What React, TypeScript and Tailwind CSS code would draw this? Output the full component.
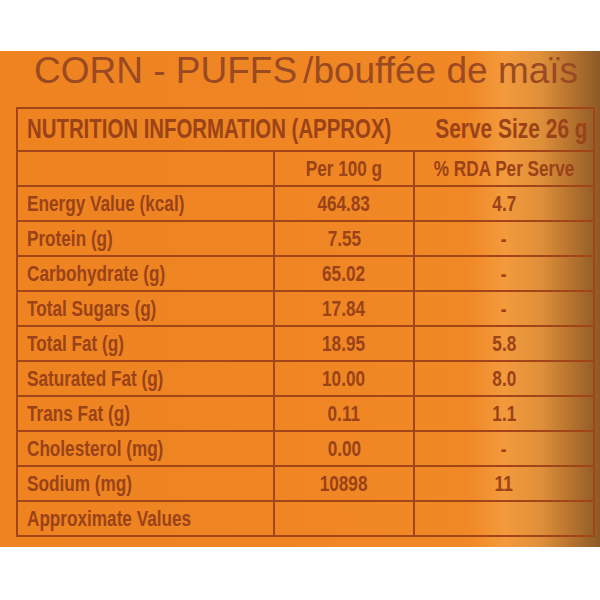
import React from "react";

const rows: [string, string, string][] = [
  ["Energy Value (kcal)", "464.83", "4.7"],
  ["Protein (g)", "7.55", "-"],
  ["Carbohydrate (g)", "65.02", "-"],
  ["Total Sugars (g)", "17.84", "-"],
  ["Total Fat (g)", "18.95", "5.8"],
  ["Saturated Fat (g)", "10.00", "8.0"],
  ["Trans Fat (g)", "0.11", "1.1"],
  ["Cholesterol (mg)", "0.00", "-"],
  ["Sodium (mg)", "10898", "11"],
  ["Approximate Values", "", ""],
];

const cond = { fontFamily: '"Liberation Sans", Arial, sans-serif' };

export default function App() {
  return (
    <div className="w-[600px] h-[600px] bg-white flex flex-col">
      <div className="h-[51px]" />
      <div className="h-[496px] bg-[linear-gradient(to_right,#ee8320_0%,#f08825_78%,#f39a3c_84%,#e0903a_90%,#b8742f_95%,#8c5a28_100%)] flex flex-col">
        <div
          className="h-[56px] pl-[34px] text-[37px] leading-[40px] text-[#9a4a22] whitespace-nowrap"
          style={{ fontFamily: '"Liberation Sans", Arial, sans-serif' }}
        >
          CORN - PUFFS<span className="ml-[6px]">/bouffée de maïs</span>
        </div>
        <div className="ml-[16px] w-[579px] border-2 border-[#a2461a] text-[#9a4218] font-bold" style={cond}>
          <div className="h-[43px] border-b-2 border-[#a2461a] flex items-center pl-[9px] pr-[5px]">
            <div className="flex-1 min-w-0 flex">
              <span className="text-[27px] inline-block scale-x-[0.755] origin-left whitespace-nowrap">
                NUTRITION INFORMATION (APPROX)
              </span>
            </div>
            <div className="w-[160px] shrink-0 flex justify-end">
              <span className="text-[27px] inline-block scale-x-[0.775] origin-right whitespace-nowrap">Serve Size 26 g</span>
            </div>
          </div>
          <div className="h-[35px] border-b-2 border-[#a2461a] flex">
            <div className="w-[257px] shrink-0 border-r-2 border-[#a2461a]" />
            <div className="w-[140px] shrink-0 border-r-2 border-[#a2461a] flex items-center justify-center">
              <span className="text-[22px] inline-block scale-x-[0.78] whitespace-nowrap">Per 100 g</span>
            </div>
            <div className="flex-1 min-w-0 flex items-center justify-center">
              <span className="text-[22px] inline-block scale-x-[0.78] whitespace-nowrap">% RDA Per Serve</span>
            </div>
          </div>
          {rows.map(([label, a, b], i) => (
            <div
              key={label}
              className={
                i < rows.length - 1
                  ? "h-[35px] border-b-2 border-[#a2461a] flex"
                  : "h-[33px] flex"
              }
            >
              <div className="w-[257px] shrink-0 border-r-2 border-[#a2461a] flex items-center pl-[9px]">
                <span className="text-[22px] inline-block scale-x-[0.78] origin-left whitespace-nowrap">{label}</span>
              </div>
              <div className="w-[140px] shrink-0 border-r-2 border-[#a2461a] flex items-center justify-center">
                <span className="text-[22px] inline-block scale-x-[0.78] whitespace-nowrap">{a}</span>
              </div>
              <div className="flex-1 min-w-0 flex items-center justify-center">
                <span className="text-[22px] inline-block scale-x-[0.78] whitespace-nowrap">{b}</span>
              </div>
            </div>
          ))}
        </div>
      </div>
    </div>
  );
}
